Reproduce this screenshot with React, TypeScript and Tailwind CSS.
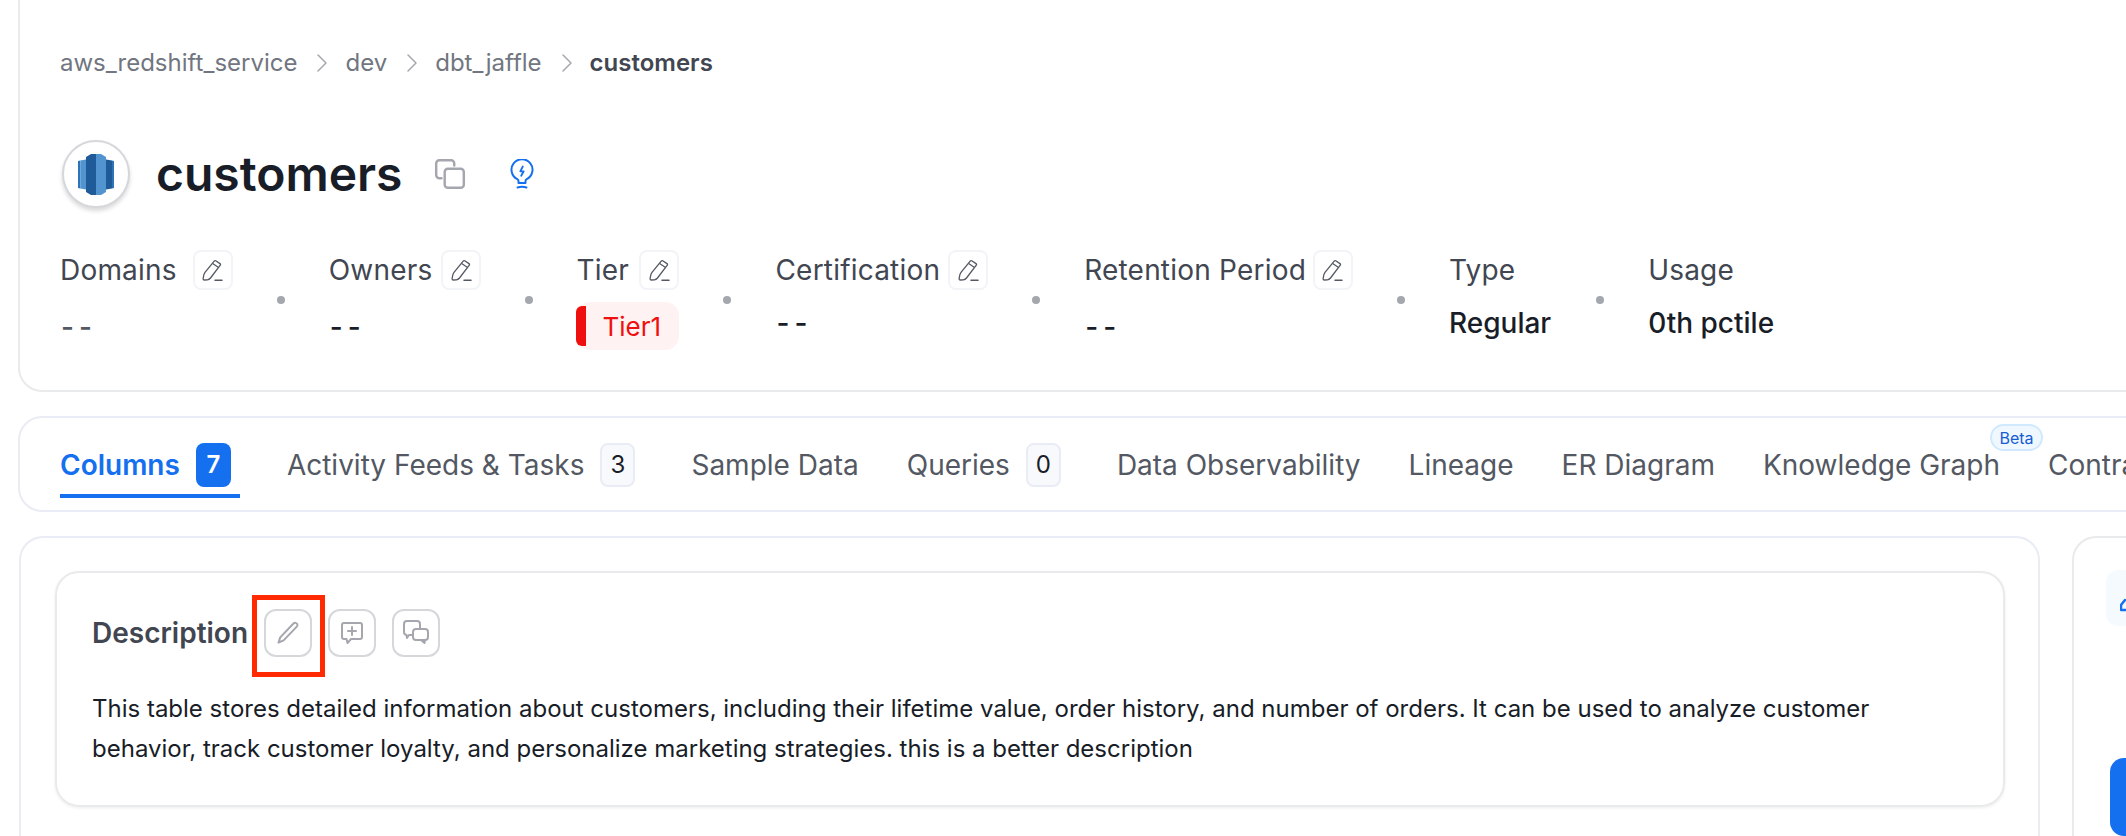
import React from "react";

const EditSmall = () => (
  <svg width="23" height="23" viewBox="0 0 23 23" fill="none" stroke="#535862" strokeWidth="1.3" strokeLinejoin="round" strokeLinecap="round">
    <path d="M14.7 1.800l4.300 2.800c.6.400.7 1 .3 1.500L9.500 19c-.8 1-2 1.700-3.200 1.800l-3 .2c-.8 0-1.300-.6-1.200-1.400L2.800 16c.2-1 .6-1.900 1.200-2.700L13.200 2.100c.4-.5 1-.6 1.500-.3z" />
    <path d="M12 4.800l5.200 3.400" />
    <path d="M14 21.200h7" strokeWidth="1.500" />
  </svg>
);

const Sep = () => (
  <svg width="12" height="20" viewBox="0 0 12 20" fill="none" stroke="#a4a7ae" strokeWidth="1.500" strokeLinecap="round" strokeLinejoin="round">
    <path d="M2 2l8 8-8 8" />
  </svg>
);

function Prop({ label, edit = true, gap = "gap-[10px]", cls = "", children }: { label: string; edit?: boolean; gap?: string; cls?: string; children: React.ReactNode }) {
  return (
    <div className={`flex flex-col shrink-0 ${cls}`}>
      <div className={`flex items-center ${gap} h-[40px]`}>
        <span className="text-[28px] leading-[40px] tracking-[0.2px] text-[#414651]">{label}</span>
        {edit && (
          <span className="flex items-center justify-center w-[40px] h-[40px] rounded-[8px] border-2 border-[#f2f4f7] bg-white">
            <EditSmall />
          </span>
        )}
      </div>
      {children}
    </div>
  );
}

const Dot = () => <div className="w-[8px] h-[8px] rounded-full bg-[#a4a7ae] mt-[46px] shrink-0" />;

const Dash = ({ mt, color = "text-[#181d27]" }: { mt: string; color?: string }) => (
  <div className={`${mt} text-[28px] leading-[40px] font-medium tracking-[5px] pl-[1px] ${color}`}>--</div>
);

function Tab({ label, count, active, beta }: { label: string; count?: string; active?: boolean; beta?: boolean }) {
  return (
    <div className={`relative shrink-0 flex items-center h-full ${count ? "pr-[8px]" : ""}`}>
      <span className={`text-[28px] whitespace-nowrap ${active ? "text-[#1570ef] font-semibold" : "text-[#535862]"}`}>{label}</span>
      {count && (
        <span className={`ml-[16px] flex items-center justify-center w-[35px] h-[44px] rounded-[8px] text-[24px] ${active ? "bg-[#1570ef] text-white font-semibold" : "bg-[#f8f9fc] border-2 border-[#eaecf5] text-[#181d27]"}`}>
          {count}
        </span>
      )}
      {active && <div className="absolute left-0 right-[-1px] bottom-[12px] h-[4px] bg-[#1570ef]" />}
      {beta && (
        <span className="absolute right-[-43px] top-[4px] flex items-center justify-center w-[53px] h-[27px] rounded-full bg-[#eff8ff] border-2 border-[#d1e9ff] text-[16px] text-[#175cd3]">
          Beta
        </span>
      )}
    </div>
  );
}

const IconBtn = ({ children }: { children: React.ReactNode }) => (
  <span className="flex items-center justify-center w-[48px] h-[48px] rounded-[12px] border-2 border-[#d5d7da] bg-white shrink-0">
    {children}
  </span>
);

export default function App() {
  return (
    <div className="relative w-[2126px] h-[836px] overflow-hidden bg-white font-['Inter',sans-serif]">
      <div className="ml-[18px] mt-[-30px] w-[2200px] h-[422px] rounded-[24px] border-2 border-[#e9eaeb] pl-[40px] pt-[73px]">
        <div className="flex items-center h-[36px] text-[24px]">
          <span className="text-[#717680]">aws_redshift_service</span>
          <span className="ml-[19px] mr-[17px]"><Sep /></span>
          <span className="text-[#717680]">dev</span>
          <span className="ml-[19px] mr-[17px]"><Sep /></span>
          <span className="text-[#717680]">dbt_jaffle</span>
          <span className="ml-[19px] mr-[17px]"><Sep /></span>
          <span className="text-[#414651] font-semibold">customers</span>
        </div>

        <div className="flex items-center mt-[58px] h-[70px]">
          <div className="w-[68px] h-[68px] rounded-full bg-white border-2 border-[#d5d7da] shadow-[0_3px_4px_rgba(0,0,0,0.15)] flex items-center justify-center shrink-0 ml-[2px]">
            <svg width="36" height="41" viewBox="0 0 36 41">
              <path d="M0 7l2.300-.6v28.200L0 34z" fill="#2E73B8" />
              <path d="M2.300 6.400L8 5.500v30l-5.700-.9z" fill="#5294CF" />
              <path d="M8 3l5-3h5v41h-5l-5-3z" fill="#205B99" />
              <path d="M18 0h5l5 3v35l-5 3h-5z" fill="#5294CF" />
              <path d="M28 5.500l6 .9v28.200l-6 .9z" fill="#205B99" />
              <path d="M34 6.400l2 .6v27l-2 .6z" fill="#2E73B8" />
            </svg>
          </div>
          <span className="ml-[26px] text-[48px] leading-[70px] font-semibold text-[#181d27]">customers</span>
          <svg className="ml-[31px]" width="34" height="34" viewBox="0 0 32 32" fill="none" stroke="#a4a7ae" strokeWidth="2.300" strokeLinejoin="round" strokeLinecap="round">
            <path d="M8 20H6a3 3 0 0 1-3-3V6a3 3 0 0 1 3-3h11a3 3 0 0 1 3 3v2" />
            <rect x="11" y="11" width="18" height="18" rx="3" />
          </svg>
          <svg className="ml-[43px]" width="24" height="30" viewBox="0 -1 24 30" fill="none" stroke="#1570ef" strokeWidth="2" strokeLinecap="round" strokeLinejoin="round">
            <path d="M8.500 23v-2c0-.9-.5-1.500-1.200-1.900A10.500 10.500 0 1 1 16.700 19.100c-.7.400-1.200 1-1.200 1.900v2z" />
            <path d="M7.500 27.500c3-1 6-1 9 0" />
            <path d="M12.800 6.500L10.300 11.300h3.400l-2.500 4.500" strokeWidth="1.800" />
          </svg>
        </div>

        <div className="flex mt-[41px] gap-[44px]">
          <Prop label="Domains" gap="gap-[16px]"><Dash mt="mt-[17px]" color="text-[#535862]" /></Prop>
          <Dot />
          <Prop label="Owners" gap="gap-[9px]"><Dash mt="mt-[17px]" /></Prop>
          <Dot />
          <Prop label="Tier" cls="ml-[-1px]">
            <div className="mt-[12px] w-[103px] h-[48px] rounded-[14px] bg-[#fef3f2] flex items-center relative">
              <span className="absolute left-0 top-[4px] h-[40px] w-[10px] bg-[#f00f0f] rounded-l-[6px]" />
              <span className="ml-[26px] text-[26px] text-[#f00f0f]">Tier1</span>
            </div>
          </Prop>
          <Dot />
          <Prop label="Certification" gap="gap-[8px]"><Dash mt="mt-[13px]" /></Prop>
          <Dot />
          <Prop label="Retention Period" gap="gap-[7px]"><Dash mt="mt-[17px]" /></Prop>
          <Dot />
          <Prop label="Type" edit={false} cls="mr-[1px]">
            <div className="mt-[13px] text-[28px] leading-[40px] font-medium text-[#181d27]">Regular</div>
          </Prop>
          <Dot />
          <Prop label="Usage" edit={false}>
            <div className="mt-[13px] text-[28px] leading-[40px] font-medium text-[#181d27]">0th pctile</div>
          </Prop>
        </div>
      </div>

      <div className="ml-[18px] mt-[24px] w-[2200px] h-[96px] rounded-[24px] border-2 border-[#eaecf5] flex items-center gap-[48px] pl-[40px] pt-[2px]">
        <Tab label="Columns" count="7" active />
        <Tab label="Activity Feeds & Tasks" count="3" />
        <Tab label="Sample Data" />
        <Tab label="Queries" count="0" />
        <Tab label="Data Observability" />
        <Tab label="Lineage" />
        <Tab label="ER Diagram" />
        <Tab label="Knowledge Graph" beta />
        <Tab label="Contracts" />
      </div>

      <div className="flex mt-[24px] ml-[19px] items-start">
        <div className="w-[2021px] h-[400px] rounded-t-[24px] border-2 border-b-0 border-[#eaecf5] pl-[34px] pr-[33px] pt-[33px] shrink-0">
          <div className="rounded-[24px] border-2 border-[#e9eaeb] shadow-[0_1px_3px_rgba(16,24,40,0.08)] h-[236px] pl-[35px] pr-[36px] pt-[36px]">
            <div className="flex items-center h-[48px] relative">
              <span className="text-[28px] font-semibold text-[#414651] mr-[16px]">Description</span>
              <div className="flex gap-[16px]">
                <IconBtn>
                  <svg width="26" height="26" viewBox="0 0 26 26" fill="none" stroke="#a4a7ae" strokeWidth="2" strokeLinecap="round" strokeLinejoin="round">
                    <path d="M18.500 3.500c1.300-1.300 3.200-.6 3.800.7.400.9.100 1.700-.5 2.400L8.600 20.400 3.500 22.500l1.700-5.100L18.500 3.500z" />
                  </svg>
                </IconBtn>
                <IconBtn>
                  <svg width="26" height="26" viewBox="0 0 26 26" fill="none" stroke="#a4a7ae" strokeWidth="2" strokeLinecap="round" strokeLinejoin="round">
                    <path d="M5 3h16a2 2 0 0 1 2 2v12a2 2 0 0 1-2 2h-9l-3.500 4-1-4H5a2 2 0 0 1-2-2V5a2 2 0 0 1 2-2z" />
                    <path d="M13 7v8M9 11h8" />
                  </svg>
                </IconBtn>
                <IconBtn>
                  <svg width="28" height="28" viewBox="0 0 28 28" fill="none" stroke="#a4a7ae" strokeWidth="2" strokeLinecap="round" strokeLinejoin="round">
                    <path d="M11 16H7l-2 3-.5-3A3 3 0 0 1 2 13V5a3 3 0 0 1 3-3h10a3 3 0 0 1 3 3v5" />
                    <rect x="11" y="10" width="15" height="11" rx="3" />
                    <path d="M19 21l3.500 3 .5-3" />
                  </svg>
                </IconBtn>
              </div>
              <div className="absolute left-[160px] top-[-14px] w-[73px] h-[82px] border-[5px] border-[#ff2a00]" />
            </div>
            <p className="mt-[32px] text-[24px] leading-[40px] text-[#181d27]">
              This table stores detailed information about customers, including their lifetime value, order history, and number of orders. It can be used to analyze customer behavior, track customer loyalty, and personalize marketing strategies. this is a better description
            </p>
          </div>
        </div>
        <div className="ml-[32px] w-[200px] h-[400px] rounded-tl-[24px] border-2 border-b-0 border-r-0 border-[#e9eaeb] pl-[32px] pt-[32px] shrink-0 relative">
          <div className="w-[100px] h-[56px] rounded-[12px] bg-[#f5faff] relative">
            <svg className="absolute left-[14px] top-[28px]" width="24" height="14" viewBox="0 0 24 14" fill="none" stroke="#1570ef" strokeWidth="2.500" strokeLinecap="round" strokeLinejoin="round">
              <path d="M5 2L1 7v5h16" />
            </svg>
          </div>
          <div className="absolute left-[36px] top-[220px] w-[100px] h-[78px] rounded-[14px] bg-[#1570ef]" />
        </div>
      </div>
    </div>
  );
}
